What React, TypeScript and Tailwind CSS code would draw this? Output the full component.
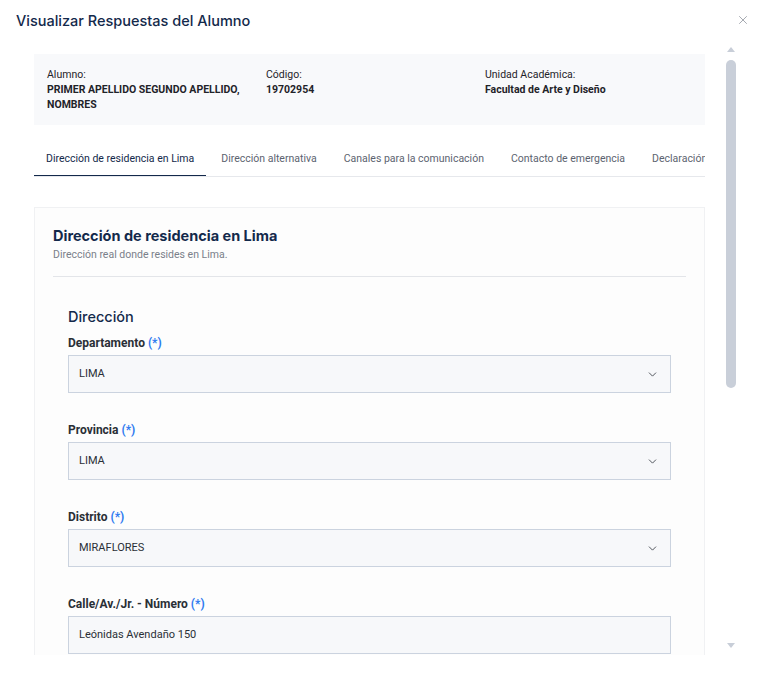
import React from "react";
import { X, ChevronDown } from "lucide-react";

const tabs = [
  "Dirección de residencia en Lima",
  "Dirección alternativa",
  "Canales para la comunicación",
  "Contacto de emergencia",
  "Declaración jurada",
];

const fields = [
  { label: "Departamento", value: "LIMA", select: true },
  { label: "Provincia", value: "LIMA", select: true },
  { label: "Distrito", value: "MIRAFLORES", select: true },
  { label: "Calle/Av./Jr. - Número", value: "Leónidas Avendaño 150", select: false },
];

const heading = { fontFamily: "Inter, 'Noto Sans', sans-serif" };
const body = { fontFamily: "Roboto, 'Liberation Sans', sans-serif" };

const Field = ({ label, value, select }: { label: string; value: string; select: boolean }) => (
  <div className="flex flex-col">
    <label className="text-[12px] leading-[16px] font-bold text-[#2a2f36]">
      {label} <span className="text-[#2f7bf0]">(*)</span>
    </label>
    <div className="mt-[4px] h-[38px] flex items-center justify-between pl-[10px] pr-[11px] bg-[#f7f8fa] border border-[#cbd3df]">
      <span className="text-[11px] text-[#2a2f36]">{value}</span>
      {select && <ChevronDown size={13} strokeWidth={1.6} className="text-[#3a3f47]" />}
    </div>
  </div>
);

export default function App() {
  return (
    <div className="w-[762px] h-[673px] bg-white overflow-hidden flex flex-col" style={body}>
      <div className="h-[45px] flex items-start justify-between pl-[16px] pr-[12px] pt-[11px]">
        <h2 className="text-[14.5px] leading-[20px] font-medium text-[#13294b]" style={heading}>
          Visualizar Respuestas del Alumno
        </h2>
        <X size={14} strokeWidth={1.3} className="text-[#8a8f98] mt-[2px]" />
      </div>

      <div className="h-[610px] flex">
        <div className="ml-[34px] w-[671px] pt-[9px] overflow-hidden">
          <div className="bg-[#f8f9fb] px-[13px] py-[13px] grid grid-cols-[219px_219px_1fr] text-[10.5px] leading-[15px] text-[#1f2329]">
            <div>
              <p>Alumno:</p>
              <p className="font-bold pr-[10px]">PRIMER APELLIDO SEGUNDO APELLIDO, NOMBRES</p>
            </div>
            <div>
              <p>Código:</p>
              <p className="font-bold">19702954</p>
            </div>
            <div>
              <p>Unidad Académica:</p>
              <p className="font-bold">Facultad de Arte y Diseño</p>
            </div>
          </div>

          <div className="mt-[16px] flex border-b border-[#e6e8ec] whitespace-nowrap overflow-hidden">
            {tabs.map((t, i) => (
              <div
                key={t}
                className={`px-[12px] pt-[10px] pb-[8px] mr-[3px] -mb-px text-[10.5px] leading-[16px] border-b-2 ${
                  i === 0 ? "border-[#13294b] text-[#13294b]" : "border-transparent text-[#5c6370]"
                }`}
              >
                {t}
              </div>
            ))}
          </div>

          <div className="mt-[30px] border border-[#f0f1f3] bg-[#fdfdfd] px-[18px] pt-[18px] pb-[30px]">
            <div className="pb-[14px] border-b border-[#e3e5e9]">
              <h3 className="text-[14.5px] leading-[20px] font-bold text-[#13294b]" style={heading}>
                Dirección de residencia en Lima
              </h3>
              <p className="text-[10.5px] leading-[14px] text-[#7a808a] mt-[2px]">
                Dirección real donde resides en Lima.
              </p>
            </div>
            <div className="px-[15px] pt-[30px]">
              <h4 className="text-[14.5px] leading-[20px] font-medium text-[#13294b]" style={heading}>
                Dirección
              </h4>
              <div className="mt-[8px] flex flex-col gap-[29px]">
                {fields.map((f) => (
                  <Field key={f.label} {...f} />
                ))}
              </div>
            </div>
          </div>
        </div>

        {/* scrollbar */}
        <div className="ml-[19px] w-[14px] flex flex-col items-center pt-[2px] pb-[7px]">
          <div className="w-0 h-0 border-l-[4px] border-r-[4px] border-b-[5px] border-l-transparent border-r-transparent border-b-[#c8ced8]" />
          <div className="mt-[8px] w-[10px] h-[328px] rounded-full bg-[#c9cfd9]" />
          <div className="flex-1" />
          <div className="w-0 h-0 border-l-[4px] border-r-[4px] border-t-[5px] border-l-transparent border-r-transparent border-t-[#c8ced8]" />
        </div>
      </div>
    </div>
  );
}
